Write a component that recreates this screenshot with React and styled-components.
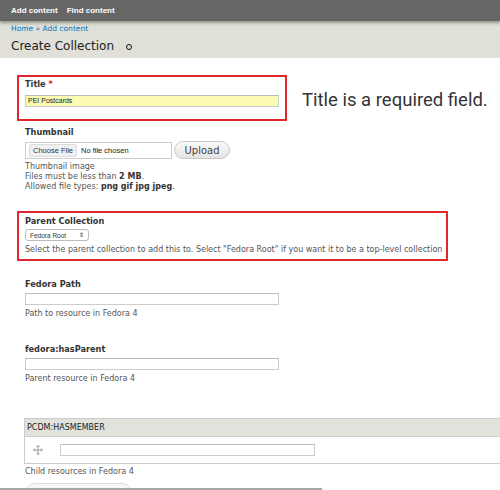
import React from "react";
import styled, { createGlobalStyle } from "styled-components";

const Global = createGlobalStyle`
  html, body { margin: 0; padding: 0; background: #fff; }
  body { font-family: "DejaVu Sans", "Liberation Sans", sans-serif; color: #333; overflow: hidden; }
  * { box-sizing: border-box; }
`;

const Page = styled.div`
  width: 500px;
  height: 490px;
  overflow: hidden;
  position: relative;
`;

const Toolbar = styled.div`
  height: 21px;
  background: #666;
  display: flex;
  align-items: center;
  gap: 9px;
  padding-left: 11px;
  box-shadow: 0 2px 3px rgba(0,0,0,0.35);
  position: relative;
  z-index: 1;
`;

const ToolLink = styled.span`
  color: #fff;
  font-size: 8px;
  font-weight: bold;
  font-family: "Liberation Sans", sans-serif;
`;

const Header = styled.div`
  background: #e0e0d8;
  padding: 3px 11px 0;
  height: 37px;
`;

const Crumbs = styled.div`
  font-size: 7.5px;
  color: #0074bd;
  line-height: 10px;
`;

const PageTitle = styled.h1`
  margin: 4px 0 0;
  font-weight: normal;
  font-size: 12px;
  line-height: 17px;
  color: #222;
  display: flex;
  align-items: center;
  gap: 12px;
`;

const Dot = styled.span`
  width: 6px;
  height: 6px;
  border-radius: 50%;
  border: 1.6px solid #111;
  display: inline-block;
  margin-top: 1px;
`;

const Content = styled.div`
  padding: 17px 0 0 17px;
  display: flex;
  flex-direction: column;
`;

const TitleRow = styled.div`
  display: flex;
  align-items: center;
  gap: 15px;
  margin-top: ${p => p.$mt || 0}px;
`;

const ErrorBox = styled.div`
  border: 2px solid #e3262b;
  width: ${p => p.$w}px;
  height: ${p => p.$h}px;
  padding: ${p => p.$pt}px 0 0 6px;
  display: flex;
  flex-direction: column;
`;

const Field = styled.div`
  display: flex;
  flex-direction: column;
  padding-left: ${p => p.$pl ?? 8}px;
  margin-top: ${p => p.$mt || 0}px;
`;

const Label = styled.div`
  font-size: 8.2px;
  font-weight: bold;
  color: #333;
  line-height: 11px;
  margin-bottom: ${p => p.$mb ?? 3}px;
`;

const Req = styled.span`
  color: #e3262b;
`;

const TextInput = styled.div`
  width: ${p => p.$w || 254}px;
  height: 12px;
  border: 1px solid #ccc;
  border-top-color: #bbb;
  background: ${p => p.$bg || "#fff"};
  font-family: "Liberation Sans", sans-serif;
  font-size: 7px;
  line-height: 10px;
  padding-left: 2px;
  color: #222;
`;

const Note = styled.div`
  font-size: 8px;
  line-height: 10px;
  color: #555;
  margin-top: ${p => p.$mt || 0}px;
  white-space: nowrap;
`;

const Strong = styled.b`
  color: #333;
`;

const BigNote = styled.div`
  font-family: Roboto, "Liberation Sans", sans-serif;
  font-size: 18.5px;
  color: #333;
  margin-top: 4px;
`;

const FileRow = styled.div`
  display: flex;
  align-items: center;
  gap: 2px;
  margin-bottom: 3px;
`;

const FileBox = styled.div`
  width: 147px;
  height: 17px;
  border: 1px solid #ccc;
  display: flex;
  align-items: center;
  padding-left: 3px;
  gap: 4px;
  font-family: "Liberation Sans", sans-serif;
  font-size: 7.5px;
  color: #222;
`;

const ChooseBtn = styled.span`
  background: #f0f0f0;
  border: 1px solid #ddd;
  border-radius: 2px;
  padding: 1px 3px;
  color: #333;
`;

const UploadBtn = styled.div`
  width: 56px;
  height: 18px;
  border-radius: 9px;
  border: 1px solid #c8c8c8;
  background: linear-gradient(#fafafa, #e4e4e4);
  display: flex;
  align-items: center;
  justify-content: center;
  font-size: 10px;
  color: #444;
`;

const Select = styled.div`
  width: 64px;
  height: 12px;
  border: 1px solid #bbb;
  border-radius: 3px;
  display: flex;
  align-items: center;
  justify-content: space-between;
  padding: 0 4px;
  font-family: "Liberation Sans", sans-serif;
  font-size: 6.5px;
  color: #333;
  margin-bottom: 4px;
`;

const Arrows = styled.span`
  font-size: 6px;
  line-height: 6px;
`;

const Table = styled.div`
  margin: 34px 0 0 7px;
  border: 1px solid #ccc;
  border-right: none;
`;

const TableHead = styled.div`
  height: 18px;
  background: #e1e2dc;
  border-bottom: 1px solid #ccc;
  display: flex;
  align-items: center;
  padding-left: 2px;
  font-size: 8px;
  color: #222;
`;

const TableRow = styled.div`
  height: 26px;
  display: flex;
  align-items: center;
  padding-left: 8px;
  gap: 17px;
`;

const Drag = styled.svg`
  width: 10px;
  height: 10px;
`;

const BottomBtn = styled.div`
  position: absolute;
  left: 26px;
  top: 483px;
  width: 105px;
  height: 16px;
  border-radius: 8px;
  border: 1px solid #ddd;
  background: #f6f6f6;
`;

const BottomLine = styled.div`
  position: absolute;
  left: 0;
  top: 488px;
  width: 322px;
  height: 2px;
  background: #a8a8a8;
`;

export default function App() {
  return (
    <Page>
      <Global />
      <Toolbar>
        <ToolLink>Add content</ToolLink>
        <ToolLink>Find content</ToolLink>
      </Toolbar>
      <Header>
        <Crumbs>Home » Add content</Crumbs>
        <PageTitle>Create Collection <Dot /></PageTitle>
      </Header>
      <Content>
        <TitleRow>
          <ErrorBox $w={270} $h={46} $pt={2}>
            <Field $pl={0}>
              <Label $mb={5}>Title <Req>*</Req></Label>
              <TextInput $bg="#fbfbb3">PEI Postcards</TextInput>
            </Field>
          </ErrorBox>
          <BigNote>Title is a required field.</BigNote>
        </TitleRow>

        <Field $mt={6}>
          <Label $mb={3}>Thumbnail</Label>
          <FileRow>
            <FileBox><ChooseBtn>Choose File</ChooseBtn>No file chosen</FileBox>
            <UploadBtn>Upload</UploadBtn>
          </FileRow>
          <Note>Thumbnail image</Note>
          <Note>Files must be less than <Strong>2 MB</Strong>.</Note>
          <Note>Allowed file types: <Strong>png gif jpg jpeg</Strong>.</Note>
        </Field>

        <TitleRow $mt={19}>
          <ErrorBox $w={431} $h={50} $pt={3}>
            <Field $pl={0}>
              <Label $mb={2}>Parent Collection</Label>
              <Select>Fedora Root <Arrows>⇕</Arrows></Select>
              <Note>Select the parent collection to add this to. Select "Fedora Root" if you want it to be a top-level collection</Note>
            </Field>
          </ErrorBox>
        </TitleRow>

        <Field $mt={18}>
          <Label $mb={3}>Fedora Path</Label>
          <TextInput />
          <Note $mt={4}>Path to resource in Fedora 4</Note>
        </Field>

        <Field $mt={25}>
          <Label $mb={3}>fedora:hasParent</Label>
          <TextInput />
          <Note $mt={4}>Parent resource in Fedora 4</Note>
        </Field>

        <Table>
          <TableHead>PCDM:HASMEMBER</TableHead>
          <TableRow>
            <Drag viewBox="0 0 10 10">
              <path d="M5 0.5 L5 9.5 M0.5 5 L9.5 5 M3.5 2 L5 0.5 L6.5 2 M3.5 8 L5 9.5 L6.5 8 M2 3.5 L0.5 5 L2 6.5 M8 3.5 L9.5 5 L8 6.5" stroke="#888" strokeWidth="0.8" fill="none" />
            </Drag>
            <TextInput $w={255} />
          </TableRow>
        </Table>
        <Field $pl={8} $mt={3}>
          <Note>Child resources in Fedora 4</Note>
        </Field>
      </Content>
      <BottomBtn />
      <BottomLine />
    </Page>
  );
}
